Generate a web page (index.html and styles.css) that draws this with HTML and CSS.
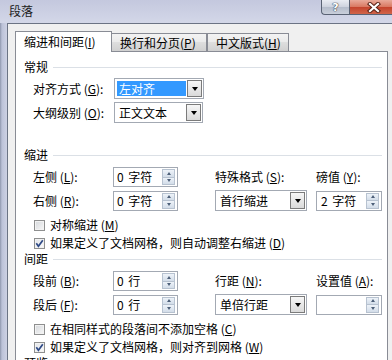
FILE: index.html
```html
<!DOCTYPE html>
<html lang="zh-CN">
<head>
<meta charset="utf-8">
<title>段落</title>
<link rel="stylesheet" href="styles.css">
</head>
<body>
<div class="window">
  <div class="titlebar">
    <span class="title">段落</span>
    <div class="caption">
      <div class="cbtn help"><span>?</span></div>
      <div class="cbtn close">
        <svg width="14" height="11" viewBox="0 0 14 11"><path d="M3 2 L11 9 M11 2 L3 9" stroke="#5b2418" stroke-width="4.2" stroke-linecap="square" fill="none"/><path d="M3 2 L11 9 M11 2 L3 9" stroke="#fff" stroke-width="2.2" stroke-linecap="square" fill="none"/></svg>
      </div>
    </div>
  </div>
  <div class="client">
    <div class="tabs">
      <div class="tab active t1">缩进和间距(<u>I</u>)</div>
      <div class="tab t2">换行和分页(<u>P</u>)</div>
      <div class="tab t3">中文版式(<u>H</u>)</div>
    </div>
    <div class="panel">
      <div class="grp"><span>常规</span><i></i></div>
      <div class="frow first">
        <label>对齐方式 (<u>G</u>):</label>
        <div class="combo c90"><span class="val sel">左对齐</span><span class="drop"></span></div>
      </div>
      <div class="frow">
        <label>大纲级别 (<u>O</u>):</label>
        <div class="combo c89"><span class="val">正文文本</span><span class="drop"></span></div>
      </div>

      <div class="grp g-indent"><span>缩进</span><i></i></div>
      <div class="fgrid">
        <label>左侧 (<u>L</u>):</label>
        <div class="spin"><span class="val">0 字符</span><span class="arrows"><i class="up"></i><i class="dn"></i></span></div>
        <label>特殊格式 (<u>S</u>):</label>
        <label>磅值 (<u>Y</u>):</label>
        <label>右侧 (<u>R</u>):</label>
        <div class="spin"><span class="val">0 字符</span><span class="arrows"><i class="up"></i><i class="dn"></i></span></div>
        <div class="combo c92"><span class="val">首行缩进</span><span class="drop"></span></div>
        <div class="spin s66"><span class="val">2 字符</span><span class="arrows"><i class="up"></i><i class="dn"></i></span></div>
      </div>
      <div class="chk first"><span class="box"></span><span>对称缩进 (<u>M</u>)</span></div>
      <div class="chk"><span class="box on"><svg width="9" height="9" viewBox="0 0 9 9"><path d="M1.3 4.3 L3.4 7.2 L7.8 1.2" fill="none" stroke="#2f4a86" stroke-width="1.7"/></svg></span><span>如果定义了文档网格，则自动调整右缩进 (<u>D</u>)</span></div>

      <div class="grp"><span>间距</span><i></i></div>
      <div class="fgrid">
        <label>段前 (<u>B</u>):</label>
        <div class="spin"><span class="val">0 行</span><span class="arrows"><i class="up"></i><i class="dn"></i></span></div>
        <label>行距 (<u>N</u>):</label>
        <label>设置值 (<u>A</u>):</label>
        <label>段后 (<u>F</u>):</label>
        <div class="spin"><span class="val">0 行</span><span class="arrows"><i class="up"></i><i class="dn"></i></span></div>
        <div class="combo c92"><span class="val">单倍行距</span><span class="drop"></span></div>
        <div class="spin s66"><span class="val"></span><span class="arrows"><i class="up"></i><i class="dn"></i></span></div>
      </div>
      <div class="chk first"><span class="box"></span><span>在相同样式的段落间不添加空格 (<u>C</u>)</span></div>
      <div class="chk"><span class="box on"><svg width="9" height="9" viewBox="0 0 9 9"><path d="M1.3 4.3 L3.4 7.2 L7.8 1.2" fill="none" stroke="#2f4a86" stroke-width="1.7"/></svg></span><span>如果定义了文档网格，则对齐到网格 (<u>W</u>)</span></div>

      <div class="grp"><span>预览</span><i></i></div>
    </div>
  </div>
</div>
</body>
</html>
```

FILE: styles.css
```css
* { box-sizing: border-box; margin: 0; padding: 0; }
html, body { width: 392px; height: 360px; overflow: hidden; }
body {
  background: #cbcfe2;
  font-family: "Noto Sans CJK SC", "Noto Sans", sans-serif;
  font-size: 12px;
  line-height: 14px;
  color: #000;
}
u { text-decoration: underline; text-underline-offset: 1px; }

.window {
  width: 397px;
  height: 360px;
  display: flex;
  flex-direction: column;
  background: linear-gradient(90deg, #8f97ad 0, #bcc2d8 2px, #cdd1e3 7px);
}
.titlebar {
  height: 23px;
  flex: none;
  display: flex;
  align-items: flex-start;
  background: linear-gradient(#c4c8de, #d3d7e8);
}
.title { padding-left: 9px; line-height: 21px; color: #1c1c1c; }
.caption { margin-left: auto; display: flex; }
.cbtn {
  height: 15px;
  flex: none;
  border: 1px solid #596274;
  border-top: none;
  display: flex;
  align-items: center;
  justify-content: center;
}
.help {
  width: 28px;
  border-radius: 0 0 0 4px;
  border-right: none;
  background: linear-gradient(#e9ecf3 0, #cdd2de 50%, #b4bccb 51%, #c9cfdb 100%);
}
.help span {
  color: #fff;
  font-family: "DejaVu Sans", sans-serif;
  font-weight: bold;
  font-size: 11px;
  line-height: 13px;
  text-shadow: 0 0 1px #3d4452, 0 0 1px #3d4452, 0 0 1px #3d4452;
}
.close {
  width: 48px;
  border-right: none;
  background: linear-gradient(#e9aa9a 0, #d87760 50%, #c4432c 51%, #d0654a 100%);
}

.client {
  flex: 1;
  margin-left: 7px;
  border-left: 1px solid #6b7384;
  border-top: 1px solid #6b7384;
  background: #f0f0f0;
  padding: 7px 0 0 7px;
}

.tabs { display: flex; height: 21px; align-items: flex-start; }
.tab {
  height: 18px;
  margin-top: 2px;
  border: 1px solid #898c95;
  border-bottom: none;
  padding-left: 8px;
  line-height: 17px;
  white-space: nowrap;
  background: linear-gradient(#f3f3f3 0, #ebebeb 45%, #dedede 50%, #d0d0d0 100%);
}
.tab.active {
  height: 21px;
  margin-top: 0;
  background: #fff;
  line-height: 20px;
  position: relative;
  z-index: 1;
}
.t1 { width: 97px; }
.t2 { width: 95px; border-left: none; }
.t3 { width: 82px; border-left: none; margin-left: 1px; }
.t3 { border-left: 1px solid #898c95; margin-left: 0; }

.panel {
  width: 373px;
  height: 400px;
  margin-top: -1px;
  background: #fff;
  border: 1px solid #898c95;
  padding: 8px 5px 0 8px;
}

.grp { display: flex; align-items: center; height: 14px; }
.grp i { flex: 1; height: 1px; background: #dbe0e6; margin-left: 5px; }
.g-indent { margin-top: 25px; }

.frow { display: flex; align-items: center; padding-left: 9px; height: 21px; margin-top: 3px; }
.frow.first { margin-top: 4px; }
.frow label { width: 81px; }

.combo {
  height: 21px;
  border: 1px solid #a3a9b3;
  background: #fff;
  display: flex;
  align-items: stretch;
  padding: 1px;
}
.c90 { width: 90px; }
.c89 { width: 89px; }
.c92 { width: 92px; }
.combo .val { flex: 1; padding-left: 3px; line-height: 17px; white-space: nowrap; }
.combo .val.sel {
  flex: none;
  width: 69px;
  margin: 1px 0 1px 1px;
  padding-left: 2px;
  line-height: 15px;
  background: #3399ff;
  color: #fff;
}
.combo .drop {
  margin-left: auto;
  width: 15px;
  border: 1px solid #7b7b7b;
  background: linear-gradient(#f6f6f6, #dadada);
  display: flex;
  align-items: center;
  justify-content: center;
}
.combo .drop::after {
  content: "";
  border-left: 3.5px solid transparent;
  border-right: 3.5px solid transparent;
  border-top: 4px solid #000;
}

.fgrid {
  display: grid;
  grid-template-columns: 80px 102px 101px 66px;
  grid-template-rows: 20px 21px;
  row-gap: 3px;
  padding-left: 9px;
  margin-top: 5px;
  align-items: center;
}
.fgrid label { white-space: nowrap; }

.spin {
  width: 65px;
  height: 20px;
  border: 1px solid #a3a9b3;
  background: #fff;
  display: flex;
  align-items: center;
  padding: 0 2px 0 3px;
}
.spin.s66 { width: 66px; }
.spin.s66 .val { padding-left: 1px; }
.spin .val { flex: 1; white-space: pre; line-height: 16px; word-spacing: 2px; }
.arrows {
  width: 13px;
  height: 16px;
  display: flex;
  flex-direction: column;
}
.arrows i {
  flex: 1;
  border: 1px solid #b7c2d0;
  background: linear-gradient(#eef3f9, #d3dde9);
  display: flex;
  align-items: center;
  justify-content: center;
}
.arrows i + i { border-top: none; }
.arrows .up::after {
  content: "";
  border-left: 2.5px solid transparent;
  border-right: 2.5px solid transparent;
  border-bottom: 3px solid #4d5f79;
}
.arrows .dn::after {
  content: "";
  border-left: 2.5px solid transparent;
  border-right: 2.5px solid transparent;
  border-top: 3px solid #4d5f79;
}

.chk { display: flex; align-items: center; height: 18px; padding-left: 10px; white-space: nowrap; }
.chk.first { margin-top: 5px; }
.box {
  width: 11px;
  height: 11px;
  margin-right: 5px;
  border: 1px solid #8e8f8f;
  background: linear-gradient(135deg, #d5d8dc, #f7f7f7);
  box-shadow: inset 0 0 0 1px #f2f2f2;
  display: flex;
  align-items: center;
  justify-content: center;
}
.box.on { background: linear-gradient(135deg, #e3e6ea, #fafafa); }
```
